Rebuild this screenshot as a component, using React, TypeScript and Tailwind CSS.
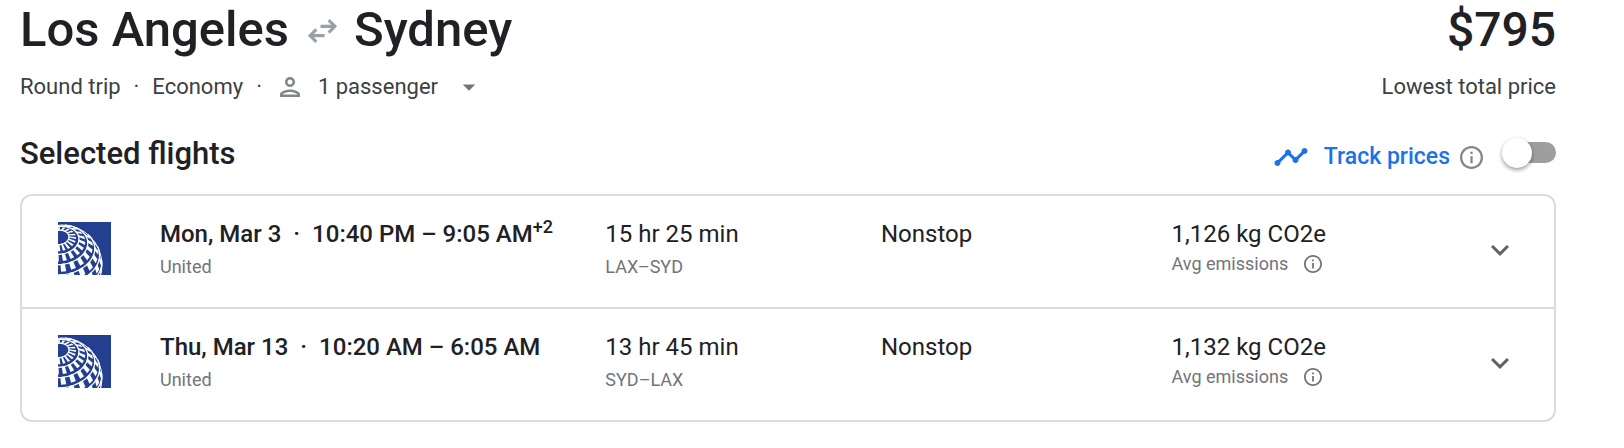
import { useState } from "react";

type Flight = {
  id: string;
  date: string;
  times: string;
  dayOffset?: string;
  airline: string;
  duration: string;
  route: string;
  stops: string;
  emissions: string;
};

const FLIGHTS: Flight[] = [
  {
    id: "outbound",
    date: "Mon, Mar 3",
    times: "10:40 PM – 9:05 AM",
    dayOffset: "+2",
    airline: "United",
    duration: "15 hr 25 min",
    route: "LAX–SYD",
    stops: "Nonstop",
    emissions: "1,126 kg CO2e",
  },
  {
    id: "return",
    date: "Thu, Mar 13",
    times: "10:20 AM – 6:05 AM",
    airline: "United",
    duration: "13 hr 45 min",
    route: "SYD–LAX",
    stops: "Nonstop",
    emissions: "1,132 kg CO2e",
  },
];

// Globe for the airline logo: a sphere seen with its pole near the top left
const GLOBE = { cx: 4, cy: 43, r: 40, tilt: 0.8, lean: 0.12 };
const RING_STEP = 15;

const project = (colat: number, lon: number): [number, number, number] => {
  const a = (colat * Math.PI) / 180;
  const b = (lon * Math.PI) / 180;
  const x = Math.sin(a) * Math.cos(b);
  const y0 = Math.sin(a) * Math.sin(b);
  const z0 = Math.cos(a);
  const y = y0 * Math.cos(GLOBE.tilt) - z0 * Math.sin(GLOBE.tilt);
  const z = y0 * Math.sin(GLOBE.tilt) + z0 * Math.cos(GLOBE.tilt);
  const xr = x * Math.cos(GLOBE.lean) + y * Math.sin(GLOBE.lean);
  const yr = y * Math.cos(GLOBE.lean) - x * Math.sin(GLOBE.lean);
  return [GLOBE.cx + GLOBE.r * xr, GLOBE.cy + GLOBE.r * yr, z];
};

const toPath = (points: [number, number, number][]) => {
  let pen = "M";
  return points
    .map(([x, y, z]) => {
      if (z < 0) {
        pen = "M";
        return "";
      }
      const part = `${pen}${x.toFixed(2)} ${y.toFixed(2)}`;
      pen = "L";
      return part;
    })
    .join("");
};

const GLOBE_LINES = Array.from({ length: 9 }, (_, i) =>
  toPath(Array.from({ length: 121 }, (_, k) => project((i + 1) * RING_STEP, k * 3)))
).join("");

const GLOBE_BLOCKS = Array.from({ length: 9 }, (_, i) =>
  Array.from({ length: 20 }, (_, k) => {
    const top = (i + 0.95) * RING_STEP;
    const bottom = (i + 1.7) * RING_STEP;
    const lon = k * 18 + i * 6;
    return toPath([
      project(top, lon),
      project(top, lon + 9),
      project(bottom, lon + 9),
      project(bottom, lon),
    ]);
  }).join("")
).join("");

const UnitedLogo = () => (
  <svg viewBox="0 0 53 53" className="size-[53px] bg-[#233f90]" role="img" aria-label="United">
    <circle cx={GLOBE.cx} cy={GLOBE.cy} r={GLOBE.r} className="fill-none stroke-white" />
    <path d={GLOBE_LINES} strokeWidth="1.3" className="fill-none stroke-white" />
    <path d={GLOBE_BLOCKS} className="fill-white" />
  </svg>
);

const SwapIcon = () => (
  <svg viewBox="0 0 30 24" className="mr-4 ml-[18px] h-[25px] w-[31px] fill-none stroke-[#9aa0a6] stroke-3" aria-hidden="true">
    <path d="M13 8h14M21 2l6 6-6 6M17 17H3M9 11l-6 6 6 6" />
  </svg>
);

const PersonIcon = () => (
  <svg viewBox="0 0 24 24" className="size-[30px] fill-[#80868b]" aria-hidden="true">
    <path d="M12 6c1.1 0 2 .9 2 2s-.9 2-2 2-2-.9-2-2 .9-2 2-2m0 10c2.7 0 5.8 1.29 6 2H6c.23-.72 3.31-2 6-2m0-12C9.79 4 8 5.79 8 8s1.79 4 4 4 4-1.79 4-4-1.79-4-4-4zm0 10c-2.67 0-8 1.34-8 4v2h16v-2c0-2.66-5.33-4-8-4z" />
  </svg>
);

const TimelineIcon = () => (
  <svg viewBox="0 0 24 24" className="size-9 fill-[#1a73e8]" aria-hidden="true">
    <path d="M23 8c0 1.1-.9 2-2 2-.18 0-.35-.02-.51-.07l-3.56 3.55c.05.16.07.34.07.52 0 1.1-.9 2-2 2s-2-.9-2-2c0-.18.02-.36.07-.52l-2.55-2.55c-.16.05-.34.07-.52.07s-.36-.02-.52-.07l-4.55 4.56c.05.16.07.33.07.51 0 1.1-.9 2-2 2s-2-.9-2-2 .9-2 2-2c.18 0 .35.02.51.07l4.56-4.55C8.02 9.36 8 9.18 8 9c0-1.1.9-2 2-2s2 .9 2 2c0 .18-.02.36-.07.52l2.55 2.55c.16-.05.34-.07.52-.07s.36.02.52.07l3.55-3.56C19.02 8.35 19 8.18 19 8c0-1.1.9-2 2-2s2 .9 2 2z" />
  </svg>
);

const InfoIcon = ({ className }: { className: string }) => (
  <svg viewBox="2 2 20 20" className={className} aria-hidden="true">
    <path d="M11 7h2v2h-2zm0 4h2v6h-2zm1-9C6.48 2 2 6.48 2 12s4.48 10 10 10 10-4.48 10-10S17.52 2 12 2zm0 18c-4.41 0-8-3.59-8-8s3.59-8 8-8 8 3.59 8 8-3.59 8-8 8z" />
  </svg>
);

const FlightRow = ({ flight }: { flight: Flight }) => (
  <li className="flex items-start border-[#dadce0] pt-[22px] pb-[23px] pl-9 not-last:border-b-2">
    <div className="mt-1 w-[102px] shrink-0">
      <UnitedLogo />
    </div>
    <div className="grid flex-1 grid-cols-[446fr_276fr_291fr_383fr]">
      <div>
        <p className="text-2xl/8 font-medium whitespace-nowrap">
          {flight.date}
          <span className="mx-3">·</span>
          {flight.times}
          {flight.dayOffset && <sup className="text-lg/4">{flight.dayOffset}</sup>}
        </p>
        <p className="text-lg/[34px] text-[#70757a]">{flight.airline}</p>
      </div>
      <div>
        <p className="text-2xl/8">{flight.duration}</p>
        <p className="text-lg/[34px] text-[#70757a]">{flight.route}</p>
      </div>
      <p className="text-2xl/8">{flight.stops}</p>
      <div className="flex items-start justify-between">
        <div>
          <p className="text-2xl/8">{flight.emissions}</p>
          <p className="flex items-center gap-4 text-lg/7 text-[#70757a]">
            Avg emissions
            <button type="button" aria-label="About emissions">
              <InfoIcon className="size-[18px] fill-[#70757a]" />
            </button>
          </p>
        </div>
        <button type="button" aria-label="Flight details" className="mt-[14px] mr-9">
          <svg viewBox="0 0 24 24" className="size-9 fill-[#5f6368]" aria-hidden="true">
            <path d="M7.41 8.59 12 13.17l4.59-4.58L18 10l-6 6-6-6 1.41-1.41z" />
          </svg>
        </button>
      </div>
    </div>
  </li>
);

const App = () => {
  const [tracking, setTracking] = useState<boolean>(false);

  return (
    <main className="bg-white pr-[68px] pl-5 font-[Roboto,sans-serif] text-[#202124]">
      <header className="flex justify-between pt-[2px]">
        <div>
          <h1 className="flex items-center text-[49px]/14 font-medium">
            Los Angeles
            <SwapIcon />
            Sydney
          </h1>
          <div className="mt-[13px] flex items-center text-[22px]/8 text-[#3c4043]">
            <span>Round trip</span>
            <span className="mx-[13px]">·</span>
            <span>Economy</span>
            <span className="mx-[13px]">·</span>
            <button type="button" className="flex items-center">
              <PersonIcon />
              <span className="mr-4 ml-[13px]">1 passenger</span>
              <svg viewBox="0 0 24 24" className="size-[30px] fill-[#70757a]" aria-hidden="true">
                <path d="M7 10l5 5 5-5z" />
              </svg>
            </button>
          </div>
        </div>
        <div className="text-right">
          <p className="text-5xl/14 font-medium">$795</p>
          <p className="mt-[13px] text-[22px]/8 text-[#3c4043]">Lowest total price</p>
        </div>
      </header>

      <section>
        <div className="mt-[31px] mb-[19px] flex items-start justify-between">
          <h2 className="text-[31px]/10 font-medium">Selected flights</h2>
          <div className="flex items-start">
            <div className="flex items-center pt-[5px]">
              <TimelineIcon />
              <label htmlFor="track" className="ml-[15px] text-[23px]/8 font-medium text-[#1a73e8]">
                Track prices
              </label>
              <button type="button" aria-label="About price tracking" className="ml-[10px]">
                <InfoIcon className="size-[23px] fill-[#80868b]" />
              </button>
            </div>
            <input
              id="track"
              type="checkbox"
              role="switch"
              checked={tracking}
              onChange={(e) => setTracking(e.target.checked)}
              className="mt-2 ml-[25px] flex h-[21px] w-12 appearance-none items-center rounded-full bg-[#9e9e9e] before:-ml-[6px] before:size-[30px] before:rounded-full before:bg-white before:shadow-[0_2px_4px_rgba(0,0,0,0.4)] checked:bg-[#8ab4f8] checked:before:ml-6"
            />
          </div>
        </div>
        <ul className="rounded-xl border-2 border-[#dadce0]">
          {FLIGHTS.map((flight) => (
            <FlightRow key={flight.id} flight={flight} />
          ))}
        </ul>
      </section>
    </main>
  );
};

export default App;
